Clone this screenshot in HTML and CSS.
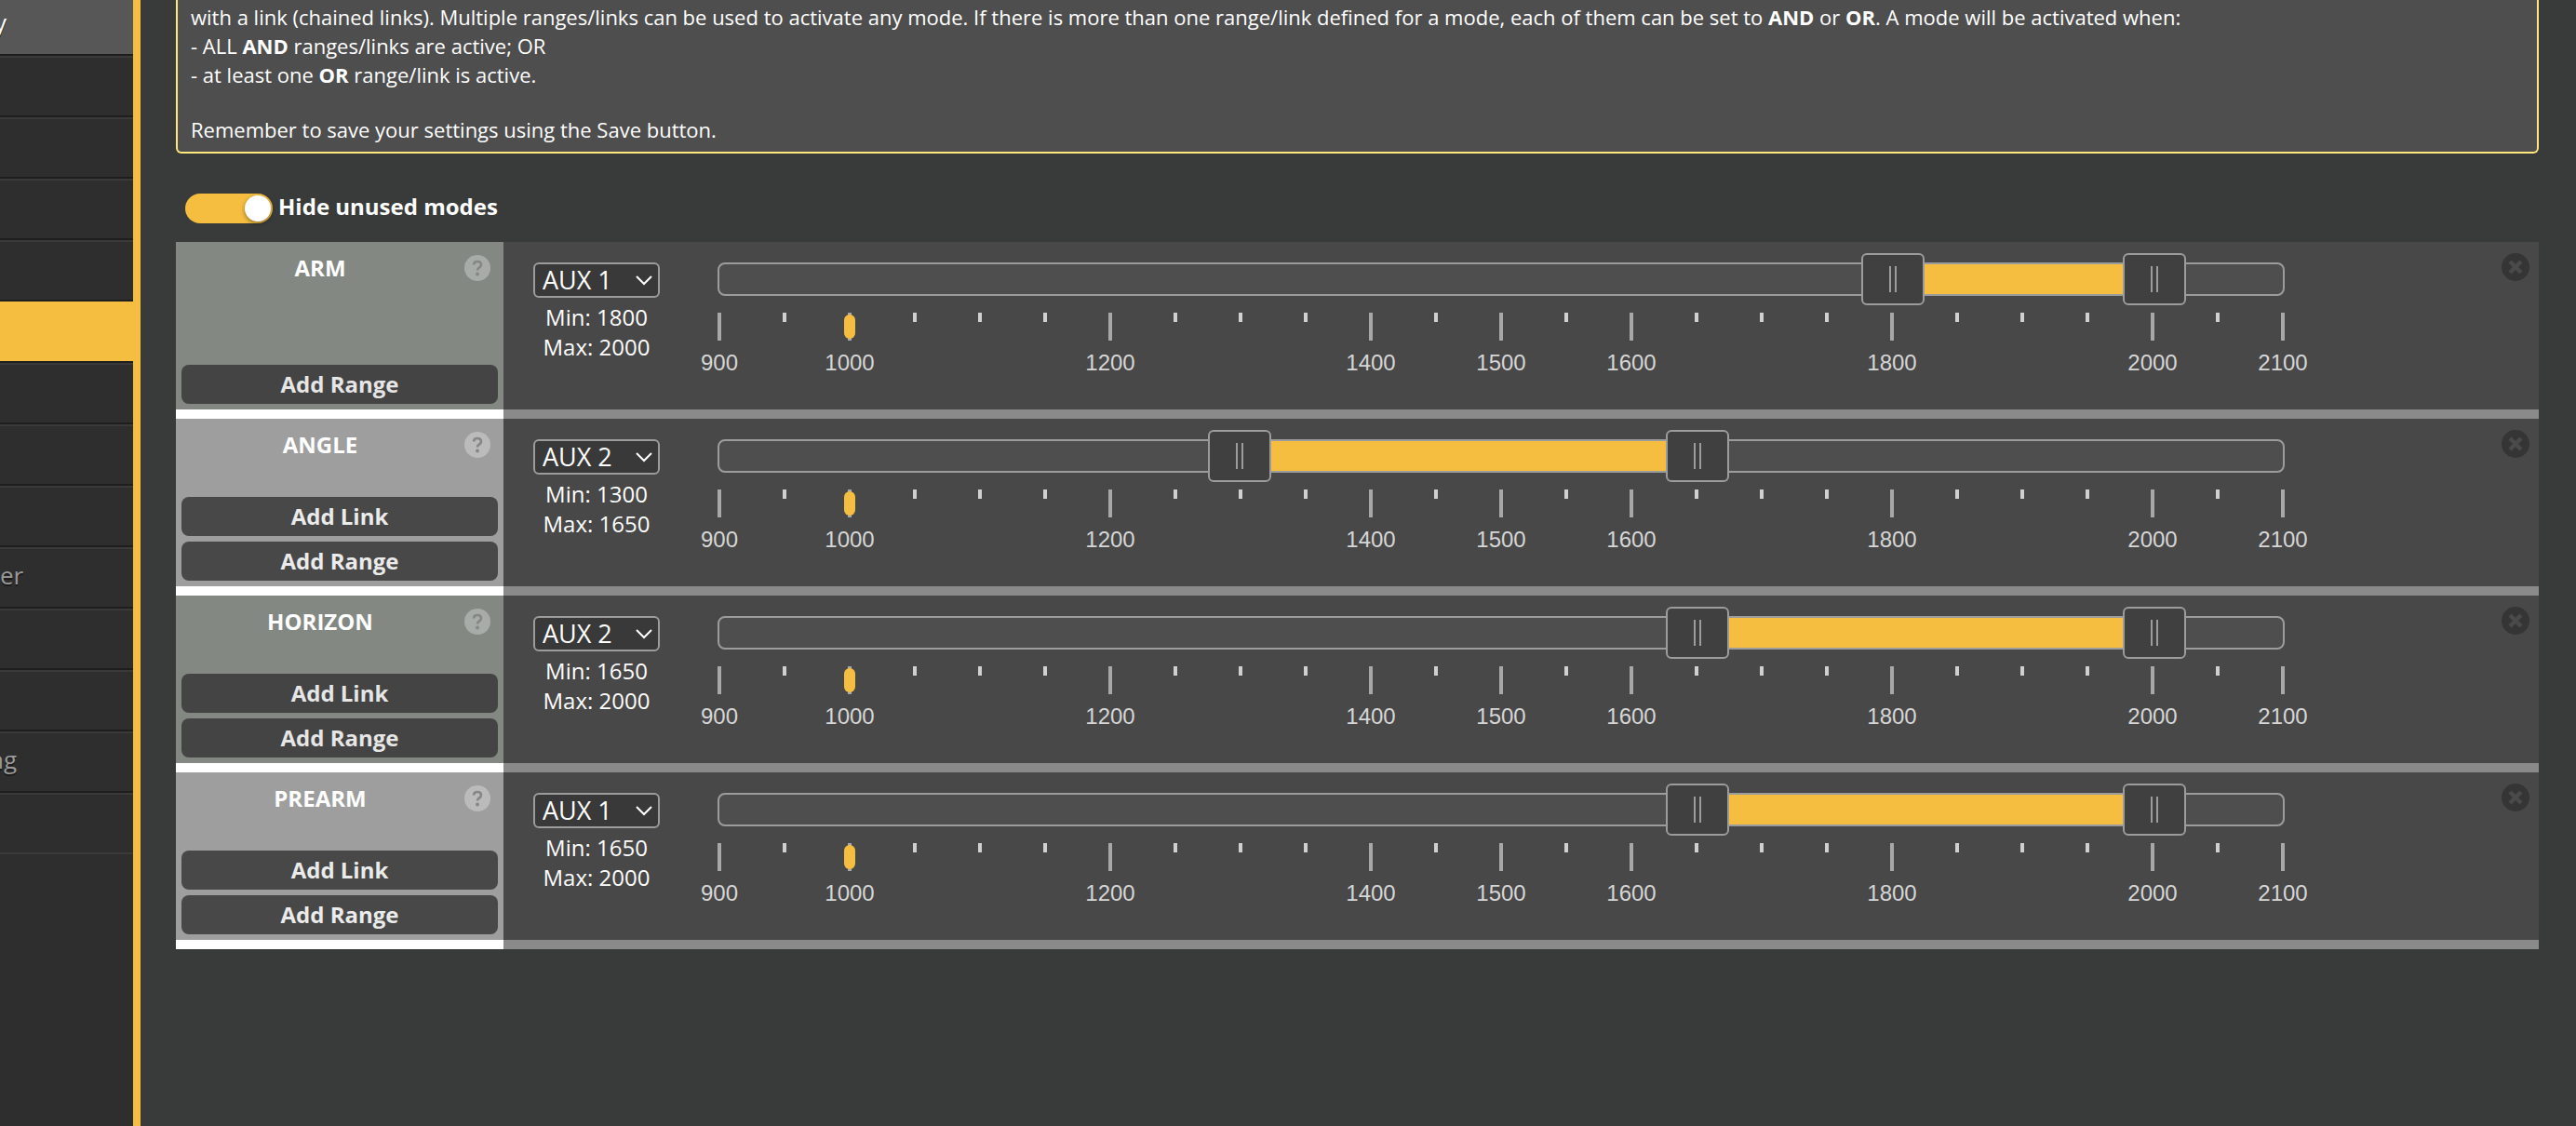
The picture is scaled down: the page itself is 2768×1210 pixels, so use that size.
FILE: index.html
```html
<!DOCTYPE html>
<html lang="en">
<head>
<meta charset="utf-8">
<title>Modes</title>
<link rel="stylesheet" href="styles.css">
</head>
<body>
<div class="app">
  <nav class="sidebar" aria-label="Tabs">
    <ul class="tabs">
      <li class="tab"><a class="tab-link tab-hover tab-cut" href="#">y</a></li>
      <li class="tab"><a class="tab-link" href="#"></a></li>
      <li class="tab"><a class="tab-link" href="#"></a></li>
      <li class="tab"><a class="tab-link" href="#"></a></li>
      <li class="tab"><a class="tab-link" href="#"></a></li>
      <li class="tab"><a class="tab-link tab-active" href="#"></a></li>
      <li class="tab"><a class="tab-link" href="#"></a></li>
      <li class="tab"><a class="tab-link" href="#"></a></li>
      <li class="tab"><a class="tab-link" href="#"></a></li>
      <li class="tab"><a class="tab-link" href="#">er</a></li>
      <li class="tab"><a class="tab-link" href="#"></a></li>
      <li class="tab"><a class="tab-link" href="#"></a></li>
      <li class="tab"><a class="tab-link tab-cut-wide" href="#">ng</a></li>
      <li class="tab"><a class="tab-link" href="#"></a></li>
    </ul>
  </nav>
  <main class="content">
    <section class="note">
      <p>with a link (chained links). Multiple ranges/links can be used to activate any mode. If there is more than one range/link defined for a mode, each of them can be set to <strong>AND</strong> or <strong>OR</strong>. A mode will be activated when:<br>- ALL <strong>AND</strong> ranges/links are active; OR<br>- at least one <strong>OR</strong> range/link is active.</p>
      <p>Remember to save your settings using the Save button.</p>
    </section>
    <label class="toggle"><input class="switch" type="checkbox" role="switch" checked>Hide unused modes</label>
    <div class="modes" id="modes"></div>
  </main>
</div>
<script src="modes.js"></script>
</body>
</html>
```
FILE: styles.css
```css
* {
  box-sizing: border-box;
}

body {
  margin: 0;
  background: #393b3a;
  color: #fff;
  font-family: "Open Sans", "Noto Sans", sans-serif;
  font-size: 22px;
}

.app {
  display: flex;
  min-height: 100vh;
}

.sidebar {
  flex: none;
  width: 151px;
  overflow: hidden;
  background: #2e2e2e;
  border-right: 8px solid #f5be41;
}

.tabs {
  margin: -6px 0 0;
  padding: 0;
  list-style: none;
}

.tab-link {
  display: block;
  height: 66px;
  border-top: 2px solid #3a3a3a;
  border-bottom: 2px solid #1e1e1e;
  color: #999;
  font-size: 26px;
  line-height: 56px;
  text-decoration: none;
  text-shadow: 0 2px #1a1a1a;
}

.tab:last-child .tab-link {
  border-bottom-color: #3a3a3a;
}

.tab-cut {
  text-indent: -6px;
}

.tab-cut-wide {
  text-indent: -12px;
}

.tab-hover {
  background: #575757;
  border-top-color: #575757;
  color: #fff;
}

.tab-active {
  background: #f5be41;
  border-top-color: #f5be41;
}

.content {
  flex: 1;
  min-width: 0;
  padding: 0 40px 0 38px;
}

.note {
  padding: 3px 14px 8px;
  border: 2px solid #ffe77b;
  border-top: 0;
  border-radius: 0 0 6px 6px;
  background: #4e4e4e;
  line-height: 31px;
}

.note p {
  margin: 0 0 28px;
}

.note p:last-child {
  margin: 0;
}

.toggle {
  display: flex;
  align-items: flex-start;
  gap: 6px;
  height: 32px;
  margin: 43px 0 20px 10px;
  font-size: 24px;
  font-weight: 700;
  line-height: 28px;
}

.switch {
  appearance: none;
  width: 94px;
  height: 32px;
  margin: 0;
  border-radius: 16px;
  background: #f5be41;
}

.switch::before {
  content: "";
  display: block;
  width: 28px;
  height: 28px;
  margin: 2px 2px 2px 64px;
  border-radius: 50%;
  background: #fff;
  box-shadow: 0 2px 5px rgba(0, 0, 0, 0.4);
}

.switch:not(:checked)::before {
  margin-left: 2px;
}

.mode {
  display: flex;
  height: 190px;
  background: #484848;
  border-bottom: 10px solid #8a8a8a;
}

.info {
  display: flex;
  flex-direction: column;
  gap: 6px;
  flex: none;
  width: 352px;
  height: 190px;
  padding: 10px 6px 6px;
  border-bottom: 10px solid #fff;
  background: #9e9e9e;
}

.mode:nth-child(odd) .info {
  background: #838883;
}

.title {
  display: flex;
  align-items: center;
  gap: 6px;
  height: 36px;
  margin-bottom: auto;
  padding-right: 8px;
}

.name {
  flex: 1;
  margin: 0;
  font-size: 24px;
  line-height: 36px;
  text-align: center;
}

.help {
  width: 28px;
  height: 28px;
}

.add {
  height: 42px;
  padding: 0 0 2px;
  border: 0;
  border-radius: 8px;
  background: #484848;
  color: #ebebeb;
  font: 700 24px "Open Sans", "Noto Sans", sans-serif;
}

.mode:nth-child(odd) .add {
  background: #444;
  color: #e6e6e6;
}

.channel {
  flex: none;
  width: 136px;
  margin: 22px 0 0 32px;
  font-size: 24px;
  line-height: 32px;
  text-align: center;
}

.select-wrap {
  position: relative;
  height: 38px;
  margin-bottom: 5px;
}

.aux {
  appearance: none;
  display: block;
  width: 136px;
  height: 38px;
  padding: 0 8px;
  border: 2px solid #9c9c9c;
  border-radius: 6px;
  background: #393939;
  color: #fff;
  font: 500 27px/34px "Open Sans", "Noto Sans", sans-serif;
}

.chevron {
  position: absolute;
  right: 7px;
  top: 12px;
  width: 20px;
  height: 14px;
  pointer-events: none;
}

.range {
  position: relative;
  flex: 1;
  margin: 22px 233px 0 62px;
}

.track {
  height: 36px;
  border: 2px solid #9c9c9c;
  border-radius: 8px;
  background: #4e4e4e;
}

.fill {
  position: absolute;
  top: 2px;
  height: 32px;
  background: #f5be41;
}

.handle {
  position: absolute;
  top: -10px;
  display: flex;
  align-items: center;
  justify-content: center;
  gap: 4px;
  width: 68px;
  height: 56px;
  margin-left: -34px;
  padding: 0;
  border: 2px solid #9c9c9c;
  border-radius: 6px;
  background: #404040;
}

.handle::before,
.handle::after {
  content: "";
  width: 2px;
  height: 28px;
  background: #9c9c9c;
}

.scale {
  position: relative;
  height: 80px;
  margin: 18px 2px 0;
}

.tick {
  position: absolute;
  top: 0;
  width: 4px;
  height: 10px;
  margin-left: -2px;
  background: #d0d0d0;
}

.tick-major {
  height: 30px;
  background: #a8a8a8;
}

.value {
  position: absolute;
  top: 40px;
  width: 80px;
  margin-left: -40px;
  color: #d6d6d6;
  font-family: "Liberation Sans", Arial, sans-serif;
  font-size: 24px;
  line-height: 28px;
  text-align: center;
}

.marker {
  position: absolute;
  top: 2px;
  width: 12px;
  height: 26px;
  margin-left: -6px;
  border-radius: 6px;
  background: #f5be41;
}

.delete {
  flex: none;
  width: 30px;
  height: 30px;
  margin: 12px 10px 0 0;
  padding: 0;
  border: 0;
  background: none;
}

.delete svg {
  display: block;
}
```
FILE: modes.js
```js
const modes = [
  { name: "ARM", aux: 1, min: 1800, max: 2000, link: false },
  { name: "ANGLE", aux: 2, min: 1300, max: 1650, link: true },
  { name: "HORIZON", aux: 2, min: 1650, max: 2000, link: true },
  { name: "PREARM", aux: 1, min: 1650, max: 2000, link: true },
];
const labelled = [900, 1000, 1200, 1400, 1500, 1600, 1800, 2000, 2100];
const pos = (v) => ((v - 900) / 12).toFixed(3) + "%";

function scale() {
  let out = "";
  for (let v = 900; v <= 2100; v += 50) {
    const major = labelled.includes(v);
    out += `<span class="tick${major ? " tick-major" : ""}" style="left:${pos(v)}"></span>`;
    if (major) out += `<span class="value" style="left:${pos(v)}">${v}</span>`;
  }
  return out + `<span class="marker" style="left:${pos(1000)}"></span>`;
}

document.getElementById("modes").innerHTML = modes.map((m) => `
  <section class="mode">
    <div class="info">
      <div class="title">
        <h2 class="name">${m.name}</h2>
        <svg class="help" viewBox="0 0 28 28" role="img" aria-label="Help">
          <circle cx="14" cy="14" r="14" fill="#fff" fill-opacity=".3"/>
          <path d="M10 10.500C10.200 7.800 12 7 14 7c2.300 0 4 1.300 4 3.400 0 3-4 3-4 6" fill="none" stroke="#848784" stroke-width="2.600"/>
          <circle cx="14" cy="20.500" r="1.900" fill="#848784"/>
        </svg>
      </div>
      ${m.link ? '<button class="add" type="button">Add Link</button>' : ""}
      <button class="add" type="button">Add Range</button>
    </div>
    <div class="channel">
      <div class="select-wrap">
        <select class="aux" aria-label="${m.name} channel"><option>AUX ${m.aux}</option></select>
        <svg class="chevron" viewBox="0 0 20 14"><path d="M2 3l8 8 8-8" fill="none" stroke="#fff" stroke-width="2"/></svg>
      </div>
      <div>Min: ${m.min}</div>
      <div>Max: ${m.max}</div>
    </div>
    <div class="range">
      <div class="track"></div>
      <div class="fill" style="left:${pos(m.min)};right:${pos(3000 - m.max)}"></div>
      <button class="handle" type="button" aria-label="Minimum" style="left:${pos(m.min)}"></button>
      <button class="handle" type="button" aria-label="Maximum" style="left:${pos(m.max)}"></button>
      <div class="scale">${scale()}</div>
    </div>
    <button class="delete" type="button" aria-label="Delete range">
      <svg width="30" height="30" viewBox="0 0 30 30"><circle cx="15" cy="15" r="15" fill="#353535"/><path d="M9 9l12 12M21 9L9 21" stroke="#4a4a4a" stroke-width="4.500"/></svg>
    </button>
  </section>`).join("");
```
